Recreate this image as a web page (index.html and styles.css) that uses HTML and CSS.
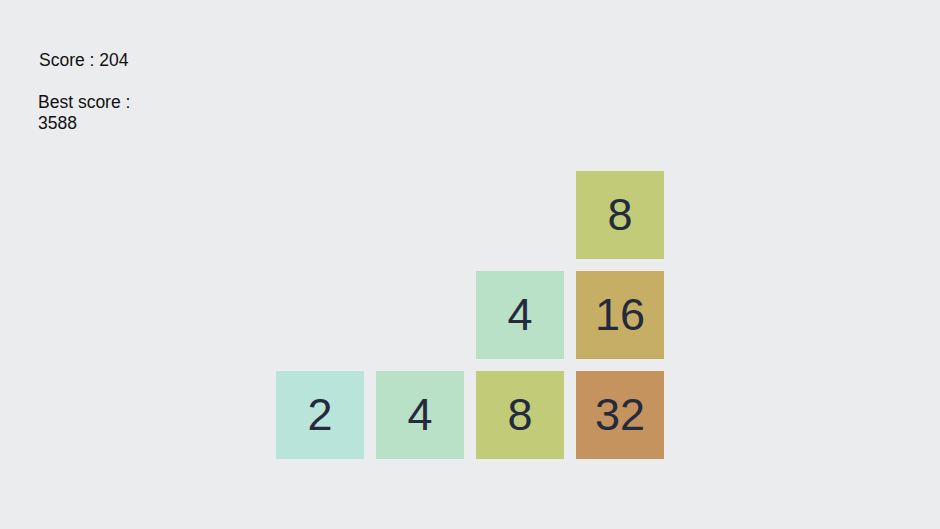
FILE: index.html
```html
<!DOCTYPE html>
<html lang="en">
<head>
    <meta charset="UTF-8">
    <meta name="viewport" content="width=device-width, initial-scale=1.0">
    <title>2048</title>
    <link rel="stylesheet" href="styles.css">
</head>
<body>
    <div class="page">
        <!-- Scores (left column) -->
        <div class="scores">
            <p class="score">Score : 204</p>
            <p class="best">Best score :<br>3588</p>
        </div>

        <!-- Board -->
        <div class="board">
            <div class="cell"></div>
            <div class="cell"></div>
            <div class="cell"></div>
            <div class="cell"></div>

            <div class="cell"></div>
            <div class="cell"></div>
            <div class="cell"></div>
            <div class="cell tile-8">8</div>

            <div class="cell"></div>
            <div class="cell"></div>
            <div class="cell tile-4">4</div>
            <div class="cell tile-16">16</div>

            <div class="cell tile-2">2</div>
            <div class="cell tile-4">4</div>
            <div class="cell tile-8">8</div>
            <div class="cell tile-32">32</div>

            <div class="cell"></div>
            <div class="cell"></div>
            <div class="cell"></div>
            <div class="cell"></div>
        </div>

        <div class="spacer"></div>
    </div>
</body>
</html>
```

FILE: styles.css
```css
body {
    margin: 0;
    background-color: #ebeced;
    color: #111;
    font-family: "Liberation Sans", Arial, sans-serif;
    overflow: hidden;
}
.page {
    display: grid;
    grid-template-columns: 1fr 388px 1fr;
    height: 100vh;
}
.scores {
    padding: 50px 0 0 39px;
    font-size: 17.5px;
    line-height: 21px;
}
.scores p {
    margin: 0;
}
.score {
    margin-bottom: 21px !important;
}
.best {
    margin-left: -1px !important;
}
.board {
    display: grid;
    grid-template-columns: repeat(4, 88px);
    grid-auto-rows: 88px;
    gap: 12px;
    margin-top: 71px;
    align-content: start;
}
.cell {
    display: flex;
    align-items: center;
    justify-content: center;
    font-size: 45px;
    color: #252a3c;
}
.tile-2 {
    background-color: #b8e4da;
}
.tile-4 {
    background-color: #b9e1c7;
}
.tile-8 {
    background-color: #c1cb78;
}
.tile-16 {
    background-color: #c6af65;
}
.tile-32 {
    background-color: #c5935e;
}
```
